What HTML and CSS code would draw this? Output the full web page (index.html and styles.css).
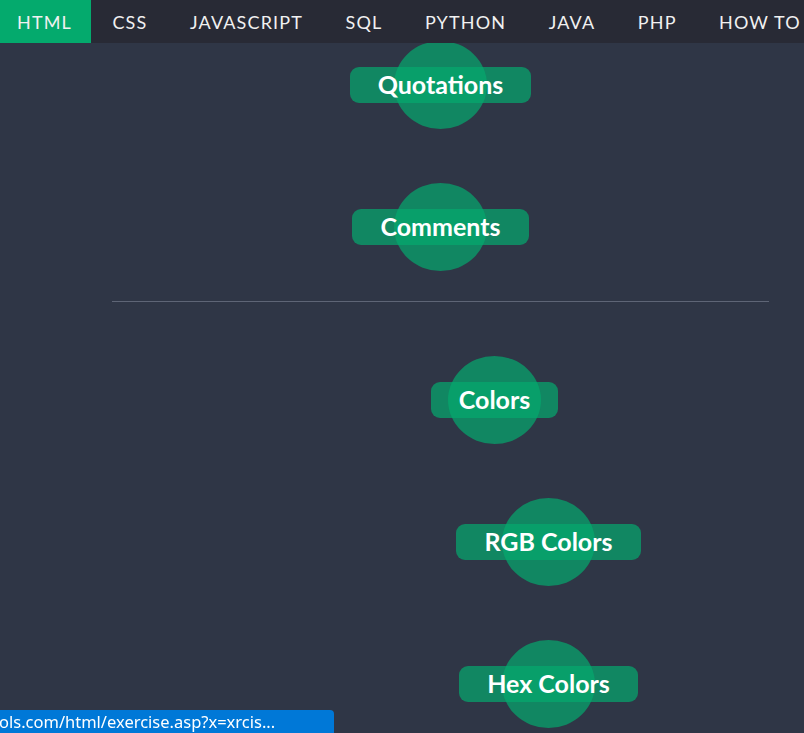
FILE: index.html
```html
<!DOCTYPE html>
<html>
<head>
<meta charset="utf-8">
<link rel="stylesheet" href="styles.css">
</head>
<body>
<nav class="topnav">
  <a class="nav-item active">HTML</a>
  <a class="nav-item">CSS</a>
  <a class="nav-item">JAVASCRIPT</a>
  <a class="nav-item">SQL</a>
  <a class="nav-item">PYTHON</a>
  <a class="nav-item">JAVA</a>
  <a class="nav-item">PHP</a>
  <a class="nav-item">HOW TO</a>
</nav>
<main class="main">
  <section class="group">
    <div class="item"><span class="blob"></span><a class="pill"><span class="pill-text">Quotations</span></a></div>
    <div class="item"><span class="blob"></span><a class="pill"><span class="pill-text">Comments</span></a></div>
  </section>
  <hr class="divider">
  <section class="group">
    <div class="item indent-1"><span class="blob"></span><a class="pill"><span class="pill-text">Colors</span></a></div>
    <div class="item indent-2"><span class="blob"></span><a class="pill"><span class="pill-text">RGB Colors</span></a></div>
    <div class="item indent-2"><span class="blob"></span><a class="pill"><span class="pill-text">Hex Colors</span></a></div>
  </section>
</main>
<div class="status">ols.com/html/exercise.asp?x=xrcis...</div>
</body>
</html>
```
FILE: styles.css
```css
html, body {
  margin: 0;
  padding: 0;
  height: 100%;
  overflow: hidden;
}
body {
  background: #2f3646;
  font-family: Lato, "Liberation Sans", sans-serif;
}
.topnav {
  display: flex;
  height: 43px;
  background: #282a35;
  position: relative;
  z-index: 2;
}
.nav-item {
  display: flex;
  align-items: center;
  padding: 0 21px 0 21.5px;
  color: #f1f1f1;
  font-size: 18px;
  letter-spacing: 1.15px;
  white-space: nowrap;
}
.nav-item.active {
  background: #04aa6d;
  padding-left: 17px;
  padding-right: 19px;
}
.main {
  margin-left: 112px;
  width: 657px;
  margin-top: -2px;
}
.group {
  display: flex;
  flex-direction: column;
  gap: 54px;
}
.item {
  position: relative;
  height: 88px;
  display: flex;
  align-items: center;
  justify-content: center;
}
.indent-1 { padding-left: 108px; }
.indent-2 { padding-left: 216px; }
.blob {
  position: absolute;
  width: 93px;
  height: 88px;
  border-radius: 50%;
  background: rgba(4, 170, 109, 0.7);
  top: 0;
  left: calc(50% - 46.5px);
}
.indent-1 .blob { left: calc(50% + 54px - 46.5px); }
.indent-2 .blob { left: calc(50% + 108px - 46.5px); }
.pill {
  display: block;
  height: 36px;
  line-height: 35px;
  padding: 0 28px;
  border-radius: 9px;
  background: rgba(4, 170, 109, 0.7);
  color: #ffffff;
  font-weight: bold;
  font-size: 25px;
  white-space: nowrap;
}
.pill-text {
  position: relative;
  z-index: 1;
}
.divider {
  border: 0;
  height: 1px;
  background: #5e6576;
  margin: 30px 0 54px;
}
.status {
  position: fixed;
  left: 0;
  bottom: 0;
  width: 334px;
  height: 23px;
  background: #0078d7;
  border-top-right-radius: 4px;
  color: #ffffff;
  font-family: "Noto Sans", "Open Sans", sans-serif;
  font-size: 16.5px;
  line-height: 24px;
  text-indent: -1px;
  white-space: nowrap;
  overflow: hidden;
}
```
